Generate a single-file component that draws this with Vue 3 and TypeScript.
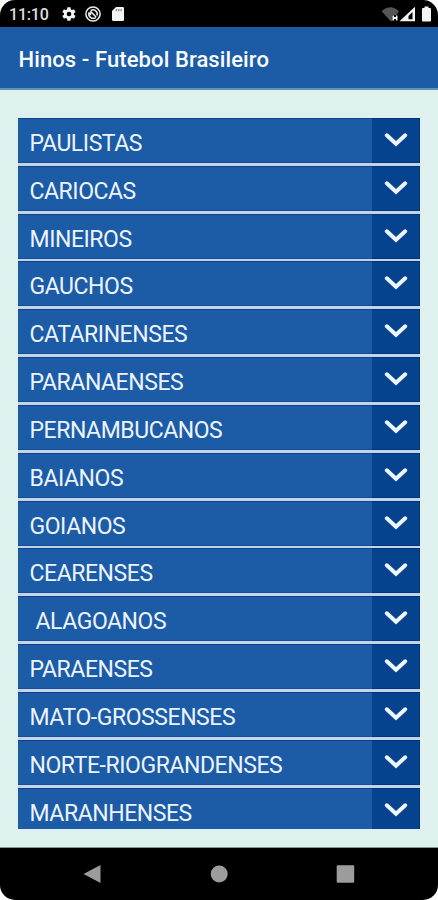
<script setup lang="ts">
interface Group {
  name: string
  indented?: boolean
}

const groups: Group[] = [
  { name: 'PAULISTAS' },
  { name: 'CARIOCAS' },
  { name: 'MINEIROS' },
  { name: 'GAUCHOS' },
  { name: 'CATARINENSES' },
  { name: 'PARANAENSES' },
  { name: 'PERNAMBUCANOS' },
  { name: 'BAIANOS' },
  { name: 'GOIANOS' },
  { name: 'CEARENSES' },
  { name: 'ALAGOANOS', indented: true },
  { name: 'PARAENSES' },
  { name: 'MATO-GROSSENSES' },
  { name: 'NORTE-RIOGRANDENSES' },
  { name: 'MARANHENSES' },
]
</script>

<template>
  <div class="screen">
    <div class="status">
      <span class="clock">11:10</span>
      <svg class="gear" viewBox="0 0 24 24">
        <path fill-rule="evenodd" d="M19.4 13a7.800 7.800 0 0 0 0-2l2.100-1.600c.2-.2.3-.5.1-.7l-2-3.400c-.1-.2-.4-.3-.6-.2l-2.500 1a7.300 7.300 0 0 0-1.700-1l-.4-2.600c0-.3-.2-.5-.5-.5h-4c-.3 0-.5.2-.5.5L9 5.100c-.6.300-1.200.6-1.700 1l-2.500-1c-.2-.1-.5 0-.6.2l-2 3.400c-.1.2-.1.5.1.7L4.500 11a7.800 7.800 0 0 0 0 2l-2.200 1.600c-.2.200-.2.500-.1.700l2 3.400c.1.200.4.300.6.200l2.500-1c.5.400 1.100.8 1.700 1l.4 2.600c0 .3.200.5.5.5h4c.3 0 .5-.2.5-.5l.4-2.600c.6-.3 1.200-.6 1.700-1l2.500 1c.2.100.5 0 .6-.2l2-3.400c.1-.2.100-.5-.1-.7zM12 15.500a3.500 3.500 0 1 1 0-7 3.500 3.500 0 0 1 0 7z" />
      </svg>
      <svg class="sync" viewBox="0 0 16 16">
        <circle cx="8" cy="8" r="7.100" />
        <path d="M10.800 11.300A4.300 4.300 0 0 1 4.200 6.200M5.800 4.300A4.300 4.300 0 0 1 11.900 9.600M5.300 5l5.900 6.300M5.500 9.200V6.500" />
      </svg>
      <svg class="card" viewBox="0 0 12 14">
        <path d="M4 0h6.700A1.300 1.300 0 0 1 12 1.300v11.400a1.300 1.300 0 0 1-1.300 1.300H1.300A1.300 1.300 0 0 1 0 12.700V4z" />
        <path class="slots" d="M4.500 2v2.200M6.800 2v2.200M9.100 2v2.200" />
      </svg>
      <span class="grow"></span>
      <svg class="signals" viewBox="0 0 56 18">
        <path fill="#555" d="M-.5 5.200Q8.250-2.500 17 5.200L14.500 9H10.500v6L8.500 15z" />
        <path d="M10.500 9.500H12v1.500h2V9.500h1.500v5H14V13h-2v1.500h-1.500z" />
        <path fill-rule="evenodd" d="M17.500 15.200 33 .8v14.400zM30.500 6l-4 4v3.200h4z" />
        <path d="M40 3q0-1 1-1h1.500V.5h4V2H48q1 0 1 1v11.500q0 1-1 1h-7q-1 0-1-1z" />
      </svg>
    </div>
    <header class="bar">
      <h1>Hinos - Futebol Brasileiro</h1>
    </header>
    <main class="content">
      <div class="list">
        <button v-for="group in groups" :key="group.name" class="row" type="button">
          <span class="name" :class="{ indented: group.indented }">{{ group.name }}</span>
          <span class="toggle">
            <svg viewBox="0 0 24 15"><path d="M2.800 3.300 12 11.700 21.200 3.300" /></svg>
          </span>
        </button>
      </div>
    </main>
    <nav class="nav">
      <svg viewBox="0 0 20 20"><path d="M.5 10 17.500 1v18z" /></svg>
      <svg viewBox="0 0 20 20"><circle cx="10.200" cy="10" r="8.500" /></svg>
      <svg viewBox="0 0 20 20"><rect x=".7" y="1.200" width="17.500" height="17.500" rx="1" /></svg>
    </nav>
  </div>
</template>

<style>
body {
  background: #fff;
}
</style>

<style scoped>
.screen {
  display: flex;
  flex-direction: column;
  width: 438px;
  height: 900px;
  overflow: hidden;
  border-radius: 15px;
  background: #def1ef;
  font-family: Roboto, sans-serif;
}
.status {
  display: flex;
  flex: none;
  align-items: center;
  box-sizing: border-box;
  height: 27px;
  padding: 1px 0 0 9px;
  background: #000;
}
.status svg {
  fill: #f4f4f4;
}
.clock {
  width: 52px;
  padding-top: 2px;
  color: #dedede;
  font-size: 16px;
  font-weight: 500;
  line-height: 24px;
  letter-spacing: -0.2px;
}
.gear {
  width: 16px;
  height: 16px;
}
.status .sync {
  width: 16px;
  height: 16px;
  margin-left: 8px;
  fill: none;
  stroke: #eee;
  stroke-width: 1.5;
}
.card {
  width: 12px;
  height: 14px;
  margin-left: 11px;
}
.slots {
  stroke: #888;
  stroke-width: 1.3;
}
.grow {
  flex: 1;
}
.signals {
  width: 56px;
  height: 18px;
  margin-top: 2px;
}
.bar {
  display: flex;
  flex: none;
  align-items: center;
  box-sizing: border-box;
  height: 63px;
  padding: 4px 18.500px 0;
  border-bottom: 2px solid #5e91b8;
  background: #1c5ba6;
}
h1 {
  margin: 0;
  color: #fafcff;
  font-size: 22px;
  font-weight: 500;
  line-height: 28px;
  letter-spacing: 0.1px;
}
.content {
  flex: 1;
  min-height: 0;
  padding: 28px 18px 19px;
  border-bottom: 1px solid #8a9694;
}
.list {
  display: flex;
  flex-direction: column;
  gap: 2.9px;
  height: 711px;
  overflow: hidden;
  background: #c3d5e5;
}
.row {
  display: flex;
  flex: none;
  box-sizing: border-box;
  height: 44.950px;
  padding: 0;
  border: 0;
  background: #1c5ba6;
  box-shadow: inset 0 1px #0d438f, inset 0 -1px #144d9b;
  color: #edf4ff;
  font: 400 23px/51px Roboto, sans-serif;
  letter-spacing: -0.44px;
  text-align: left;
}
.name {
  flex: 1;
  padding-left: 11.500px;
}
.indented {
  padding-left: 17.500px;
}
.toggle {
  display: flex;
  justify-content: center;
  width: 48px;
  background: #06438f;
  box-shadow: inset 0 1px #03317e, inset -1px -1px #03357f;
}
.toggle svg {
  width: 24px;
  height: 15px;
  margin-top: 14px;
  fill: none;
  stroke: #eef5ff;
  stroke-linecap: round;
  stroke-width: 4;
}
.nav {
  display: flex;
  flex: none;
  align-items: center;
  justify-content: center;
  gap: 106.500px;
  height: 52px;
  background: #000;
}
.nav svg {
  width: 20px;
  height: 20px;
  fill: #9c9c9c;
}
</style>
